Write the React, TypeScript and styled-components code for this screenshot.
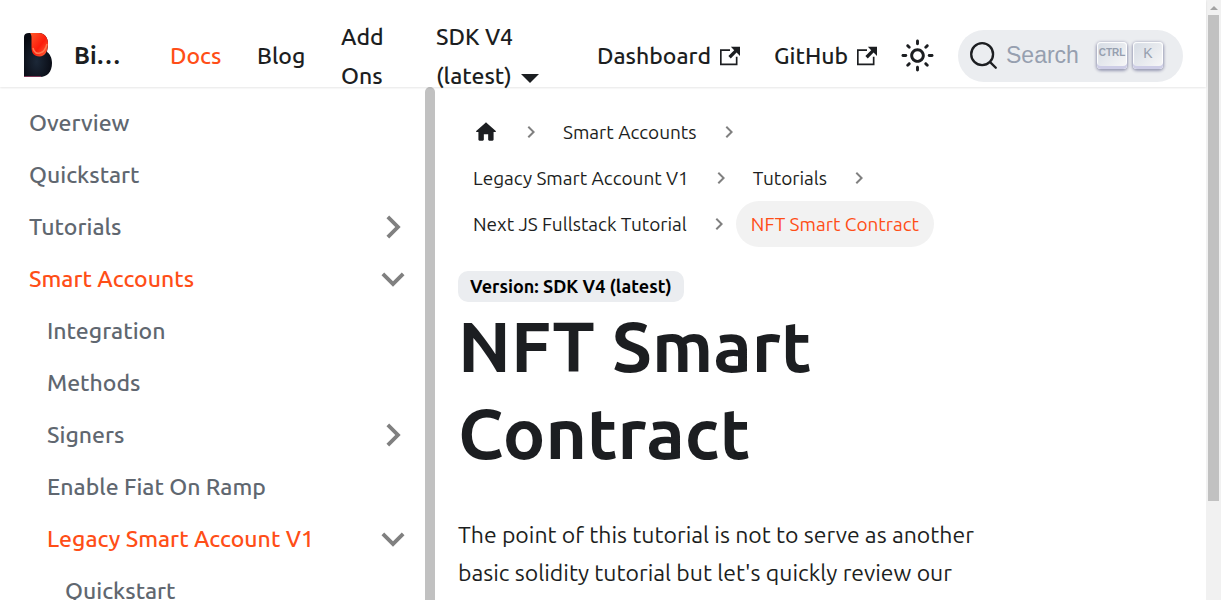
import React from "react";
import styled, { createGlobalStyle } from "styled-components";

const GlobalStyle = createGlobalStyle`
  *, *::before, *::after { box-sizing: border-box; }
  body {
    margin: 0;
    background: #fff;
    color: #1c1e21;
    font-family: Ubuntu, "Open Sans", "Noto Sans", sans-serif;
    font-size: 23px;
    line-height: 38px;
    text-rendering: optimizeLegibility;
    -webkit-font-smoothing: antialiased;
  }
  a { color: inherit; text-decoration: none; }
  svg { display: block; flex: none; }
`;

const ACCENT = "#ff4e17";

const Frame = styled.div`
  display: grid;
  grid-template-columns: minmax(0, 1fr) 15px;
  height: 100vh;
  overflow: hidden;
`;

const Page = styled.div`
  display: flex;
  flex-direction: column;
  min-width: 0;
  min-height: 0;
`;

const Navbar = styled.header`
  position: relative;
  z-index: 1;
  display: flex;
  align-items: center;
  flex: none;
  height: 87px;
  padding: 24px 23px 0 24px;
  background: #fff;
  box-shadow: 0 1px 2px rgba(0, 0, 0, 0.1);
`;

const Brand = styled.a`
  display: flex;
  align-items: center;
  gap: 22px;
  width: 128px;
  font-size: 24px;
  font-weight: 700;
`;

const NavLink = styled.a<{ $active?: boolean; $width?: number }>`
  display: flex;
  align-items: center;
  gap: 9px;
  flex: none;
  width: ${(p) => (p.$width ? `${p.$width}px` : "auto")};
  padding: 0 17px 0 18px;
  line-height: 39px;
  font-weight: 500;
  color: ${(p) => (p.$active ? ACCENT : "inherit")};
`;

const Caret = styled.span`
  display: inline-block;
  margin-left: 9px;
  border: solid transparent;
  border-width: 9px 9px 0;
  border-top-color: currentColor;
  vertical-align: 1px;
`;

const NavEnd = styled.div`
  display: flex;
  align-items: center;
  margin-left: auto;
`;

const ThemeButton = styled.button`
  display: grid;
  place-items: center;
  width: 48px;
  height: 48px;
  padding: 0;
  border: 0;
  background: none;
  color: inherit;
`;

const SearchButton = styled.button`
  display: flex;
  align-items: center;
  width: 225px;
  height: 52px;
  margin-left: 17px;
  padding: 0 20px 0 11px;
  border: 0;
  border-radius: 26px;
  background: #ebedf0;
  color: #1c1e21;
  font: 23px "Liberation Sans", sans-serif;
`;

const SearchLabel = styled.span`
  flex: 1;
  padding-left: 8px;
  text-align: left;
  color: #969faf;
`;

const Key = styled.kbd<{ $narrow?: boolean }>`
  width: 30px;
  height: 27px;
  margin-left: 6px;
  border-radius: 4px;
  background: linear-gradient(-225deg, #d5dbe4, #f8f8f8);
  box-shadow: inset 0 -3px 0 0 #cdcde6, inset 0 0 1px 1px #fff,
    0 1px 3px 1px rgba(30, 35, 90, 0.4);
  color: #969faf;
  text-align: center;
  font-family: "Liberation Sans", sans-serif;
  font-weight: ${(p) => (p.$narrow ? 700 : 400)};
  font-size: ${(p) => (p.$narrow ? 10 : 14)}px;
  line-height: 22px;
`;

const Body = styled.div`
  display: flex;
  flex: 1;
  min-height: 0;
`;

const Sidebar = styled.nav`
  display: flex;
  flex: 0 0 435px;
  overflow: hidden;
`;

const Menu = styled.ul`
  flex: 1;
  margin: 0;
  padding: 10px 9px 0 11px;
  list-style: none;
`;

const MenuLink = styled.a<{ $level: number; $active?: boolean }>`
  display: flex;
  align-items: center;
  justify-content: space-between;
  height: 52px;
  padding-left: ${(p) => p.$level * 18}px;
  font-weight: 500;
  color: ${(p) => (p.$active ? ACCENT : "#606770")};
`;

const SidebarScroll = styled.div`
  width: 10px;
  border-radius: 5px 5px 0 0;
  background: #c1c1c1;
`;

const Main = styled.main`
  flex: 1;
  min-width: 0;
  padding: 22px 23px 0;
`;

const Article = styled.article`
  width: 74%;
`;

const Crumbs = styled.ol`
  display: flex;
  flex-wrap: wrap;
  margin: 0 0 24px;
  padding: 0;
  list-style: none;
`;

const Crumb = styled.li`
  display: flex;
  align-items: center;
  gap: 5px;
  margin-right: 5px;
`;

const CrumbLink = styled.a<{ $active?: boolean }>`
  display: flex;
  align-items: center;
  height: 46px;
  padding: 0 15px;
  border-radius: 23px;
  font-size: 19px;
  white-space: nowrap;
  background: ${(p) => (p.$active ? "#f2f2f2" : "transparent")};
  color: ${(p) => (p.$active ? ACCENT : "inherit")};
`;

const Version = styled.span`
  display: block;
  width: fit-content;
  padding: 0 12px;
  border-radius: 10px;
  background: #ebedf0;
  color: #000;
  font-size: 18px;
  font-weight: 700;
  line-height: 31px;
`;

const Title = styled.h1`
  margin: 0 0 40px;
  font-size: 71px;
  font-weight: 700;
  line-height: 87px;
`;

const Text = styled.p`
  margin: 0;
`;

const PageScroll = styled.div`
  display: flex;
  flex-direction: column;
  align-items: center;
  background: #f1f1f1;
`;

const ScrollUp = styled.span`
  margin: 6px 0 5px;
  border: solid transparent;
  border-width: 0 4px 4px;
  border-bottom-color: #a3a3a3;
`;

const ScrollThumb = styled.span`
  width: 11px;
  height: 81%;
  background: #c1c1c1;
`;

const Chevron = ({ size, angle }: { size: number; angle: number }) => (
  <svg width={size} height={size} viewBox="0 0 24 24" fill="#808080" aria-hidden="true">
    <path
      transform={`rotate(${angle} 12 12)`}
      d="M7.41 15.41L12 10.83l4.59 4.58L18 14l-6-6-6 6z"
    />
  </svg>
);

const ExternalIcon = () => (
  <svg width="20" height="20" viewBox="0 0 24 24" fill="currentColor" aria-hidden="true">
    <path d="M21 13v10h-21v-19h12v2h-10v15h17v-8h2zm3-12h-10.988l4.035 4-6.977 7.07 2.828 2.828 6.977-7.07 4.125 4.172v-11z" />
  </svg>
);

const HomeIcon = () => (
  <svg width="26" height="26" viewBox="0 0 24 24" fill="currentColor" aria-hidden="true">
    <path d="M10 19v-5h4v5c0 .55.45 1 1 1h3c.55 0 1-.45 1-1v-7h1.7c.46 0 .68-.57.33-.87L12.67 3.6c-.38-.34-.96-.34-1.34 0l-8.36 7.53c-.34.3-.13.87.33.87H5v7c0 .55.45 1 1 1h3c.55 0 1-.45 1-1z" />
  </svg>
);

const SunIcon = () => (
  <svg width="35" height="35" viewBox="0 0 24 24" fill="currentColor" aria-hidden="true">
    <path d="M12,9c1.65,0,3,1.35,3,3s-1.35,3-3,3s-3-1.35-3-3S10.35,9,12,9 M12,7c-2.76,0-5,2.24-5,5s2.24,5,5,5s5-2.24,5-5 S14.76,7,12,7L12,7z M2,13l2,0c0.55,0,1-0.45,1-1s-0.45-1-1-1l-2,0c-0.55,0-1,0.45-1,1S1.45,13,2,13z M20,13l2,0c0.55,0,1-0.45,1-1 s-0.45-1-1-1l-2,0c-0.55,0-1,0.45-1,1S19.45,13,20,13z M11,2v2c0,0.55,0.45,1,1,1s1-0.45,1-1V2c0-0.55-0.45-1-1-1S11,1.45,11,2z M11,20v2c0,0.55,0.45,1,1,1s1-0.45,1-1v-2c0-0.55-0.45-1-1-1C11.45,19,11,19.45,11,20z M5.99,4.58c-0.39-0.39-1.03-0.39-1.41,0 c-0.39,0.39-0.39,1.03,0,1.41l1.06,1.06c0.39,0.39,1.03,0.39,1.41,0s0.39-1.03,0-1.41L5.99,4.58z M18.36,16.95 c-0.39-0.39-1.03-0.39-1.41,0c-0.39,0.39-0.39,1.03,0,1.41l1.06,1.06c0.39,0.39,1.03,0.39,1.41,0c0.39-0.39,0.39-1.03,0-1.41 L18.36,16.95z M19.42,5.99c0.39-0.39,0.39-1.03,0-1.41c-0.39-0.39-1.03-0.39-1.41,0l-1.06,1.06c-0.39,0.39-0.39,1.03,0,1.41 s1.03,0.39,1.41,0L19.42,5.99z M7.05,18.36c0.39-0.39,0.39-1.03,0-1.41c-0.39-0.39-1.03-0.39-1.41,0l-1.06,1.06 c-0.39,0.39-0.39,1.03,0,1.41s1.03,0.39,1.41,0L7.05,18.36z" />
  </svg>
);

const SearchIcon = () => (
  <svg width="29" height="29" viewBox="0 0 20 20" fill="none" aria-hidden="true">
    <path
      d="M14.386 14.386l4.0877 4.0877-4.0877-4.0877c-2.9418 2.9419-7.7115 2.9419-10.6533 0-2.9419-2.9418-2.9419-7.7115 0-10.6533 2.9418-2.9419 7.7115-2.9419 10.6533 0 2.9419 2.9418 2.9419 7.7115 0 10.6533z"
      stroke="currentColor"
      strokeWidth="1.6"
      strokeLinecap="round"
      strokeLinejoin="round"
    />
  </svg>
);

const Logo = () => (
  <svg width="28" height="45" viewBox="0 0 28 45" aria-hidden="true">
    <defs>
      <radialGradient id="logoBody" cx="0.45" cy="0.65" r="0.6">
        <stop offset="0" stopColor="#1c2838" />
        <stop offset="1" stopColor="#080a12" />
      </radialGradient>
      <linearGradient id="logoDrop" x1="0" y1="0" x2="1" y2="1">
        <stop offset="0" stopColor="#ff5a2b" />
        <stop offset="0.55" stopColor="#fb1c0b" />
        <stop offset="1" stopColor="#ff6a3c" />
      </linearGradient>
    </defs>
    <path
      d="M0 4Q0 0 5 0H15C21 0 24 5 24 11C24 15 23 17 23 19C26 21 28 25 28 30C28 39 23 44 16 44H0Z"
      fill="url(#logoBody)"
    />
    <path d="M0 43.5H17" stroke="#7b3654" />
    <path
      d="M6 0H15C21 0 24 5 24 11C24 18 21 23.5 15.5 23.5C10 23.5 7.5 20 7.5 14V5C7.5 2.5 7 1 6 0Z"
      fill="url(#logoDrop)"
    />
    <path
      d="M9 15C10 20 13 21 16 20C20 19 22 15 23 11"
      fill="none"
      stroke="#ff7950"
      strokeWidth="1.5"
    />
  </svg>
);

type Item = { label: string; level: number; active?: boolean; open?: boolean };

const items: Item[] = [
  { label: "Overview", level: 1 },
  { label: "Quickstart", level: 1 },
  { label: "Tutorials", level: 1, open: false },
  { label: "Smart Accounts", level: 1, active: true, open: true },
  { label: "Integration", level: 2 },
  { label: "Methods", level: 2 },
  { label: "Signers", level: 2, open: false },
  { label: "Enable Fiat On Ramp", level: 2 },
  { label: "Legacy Smart Account V1", level: 2, active: true, open: true },
  { label: "Quickstart", level: 3 },
];

const crumbs = [
  "Smart Accounts",
  "Legacy Smart Account V1",
  "Tutorials",
  "Next JS Fullstack Tutorial",
];

export default function App() {
  return (
    <Frame>
      <GlobalStyle />
      <Page>
        <Navbar>
          <Brand href="#">
            <Logo />
            Bi…
          </Brand>
          <NavLink href="#" $active $width={87}>Docs</NavLink>
          <NavLink href="#" $width={84}>Blog</NavLink>
          <NavLink href="#" $width={95}>Add Ons</NavLink>
          <NavLink href="#" $width={150}>
            <span>
              SDK V4 (latest)
              <Caret />
            </span>
          </NavLink>
          <NavEnd>
            <NavLink href="#" $width={177}>Dashboard <ExternalIcon /></NavLink>
            <NavLink href="#" $width={137}>GitHub <ExternalIcon /></NavLink>
            <ThemeButton aria-label="Switch theme"><SunIcon /></ThemeButton>
            <SearchButton>
              <SearchIcon />
              <SearchLabel>Search</SearchLabel>
              <Key $narrow>CTRL</Key>
              <Key>K</Key>
            </SearchButton>
          </NavEnd>
        </Navbar>
        <Body>
          <Sidebar>
            <Menu>
              {items.map((item, i) => (
                <li key={i}>
                  <MenuLink href="#" $level={item.level} $active={item.active}>
                    {item.label}
                    {item.open !== undefined && (
                      <Chevron size={46} angle={item.open ? 180 : 90} />
                    )}
                  </MenuLink>
                </li>
              ))}
            </Menu>
            <SidebarScroll />
          </Sidebar>
          <Main>
            <Article>
              <Crumbs>
                <Crumb>
                  <CrumbLink href="#" aria-label="Home"><HomeIcon /></CrumbLink>
                  <Chevron size={24} angle={90} />
                </Crumb>
                {crumbs.map((label) => (
                  <Crumb key={label}>
                    <CrumbLink href="#">{label}</CrumbLink>
                    <Chevron size={24} angle={90} />
                  </Crumb>
                ))}
                <Crumb>
                  <CrumbLink href="#" $active>NFT Smart Contract</CrumbLink>
                </Crumb>
              </Crumbs>
              <Version>Version: SDK V4 (latest)</Version>
              <Title>NFT Smart Contract</Title>
              <Text>
                The point of this tutorial is not to serve as another basic
                solidity tutorial but let's quickly review our
              </Text>
            </Article>
          </Main>
        </Body>
      </Page>
      <PageScroll>
        <ScrollUp />
        <ScrollThumb />
      </PageScroll>
    </Frame>
  );
}
